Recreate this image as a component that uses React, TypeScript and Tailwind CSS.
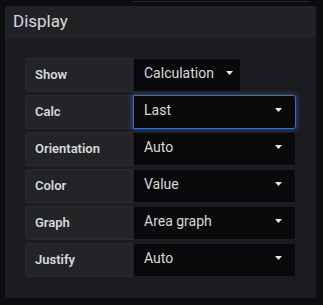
import { ReactNode } from 'react'

interface Row {
  label: string
  value: string
  narrow?: boolean
  focused?: boolean
}

const rows: Row[] = [
  { label: 'Show', value: 'Calculation', narrow: true },
  { label: 'Calc', value: 'Last', focused: true },
  { label: 'Orientation', value: 'Auto' },
  { label: 'Color', value: 'Value' },
  { label: 'Graph', value: 'Area graph' },
  { label: 'Justify', value: 'Auto' },
]

function Caret() {
  return (
    <svg width="7" height="4" viewBox="0 0 7 4" className="shrink-0">
      <path d="M0 0 L7 0 L3.5 4 Z" fill="#e9e9e9" />
    </svg>
  )
}

function Field({ row }: { row: Row }): ReactNode {
  return (
    <div className="flex h-[34px]">
      <div className="w-[108px] shrink-0 flex items-center pl-[9px] bg-[#232428] border border-[#2a2b2f] rounded-l-[3px] text-[13px] font-semibold text-[#d8d9da]">
        {row.label}
      </div>
      <div
        className={
          row.focused
            ? 'w-[163px] flex items-center justify-between pl-[10px] pr-[13px] pb-[4px] bg-[#09090b] border border-[#3e6fb8] rounded-r-[3px] shadow-[0_0_5px_1px_rgba(58,108,190,0.55)] text-[14px] text-[#d8d9da]'
            : row.narrow
              ? 'w-[108px] flex items-center gap-[12px] pl-[10px] pb-[4px] bg-[#09090b] border border-[#1c1d21] rounded-r-[3px] text-[14px] text-[#d8d9da]'
              : 'w-[163px] flex items-center justify-between pl-[10px] pr-[13px] pb-[4px] bg-[#09090b] border border-[#1c1d21] rounded-r-[3px] text-[14px] text-[#d8d9da]'
        }
      >
        <span>{row.value}</span>
        <Caret />
      </div>
    </div>
  )
}

export default function App() {
  return (
    <div className="w-[323px] h-[305px] bg-[#0c0d0f] overflow-hidden font-['Roboto',sans-serif]">
      {/* previous section edge */}
      <div className="ml-[133px] w-[177px] h-[2px] bg-[#09090b] border-b border-[#26272b]" />

      <div className="ml-[5px] mt-[4px] w-[311px] h-[292px] rounded-[3px] bg-[#1b1c1f] overflow-hidden">
        <div className="h-[32px] bg-[#212226] flex items-center pl-[8px] text-[17px] text-[#d8d9da]">
          Display
        </div>
        <div className="pt-[20px] pl-[20px] flex flex-col gap-[3px]">
          {rows.map((row) => (
            <Field key={row.label} row={row} />
          ))}
        </div>
      </div>
    </div>
  )
}
